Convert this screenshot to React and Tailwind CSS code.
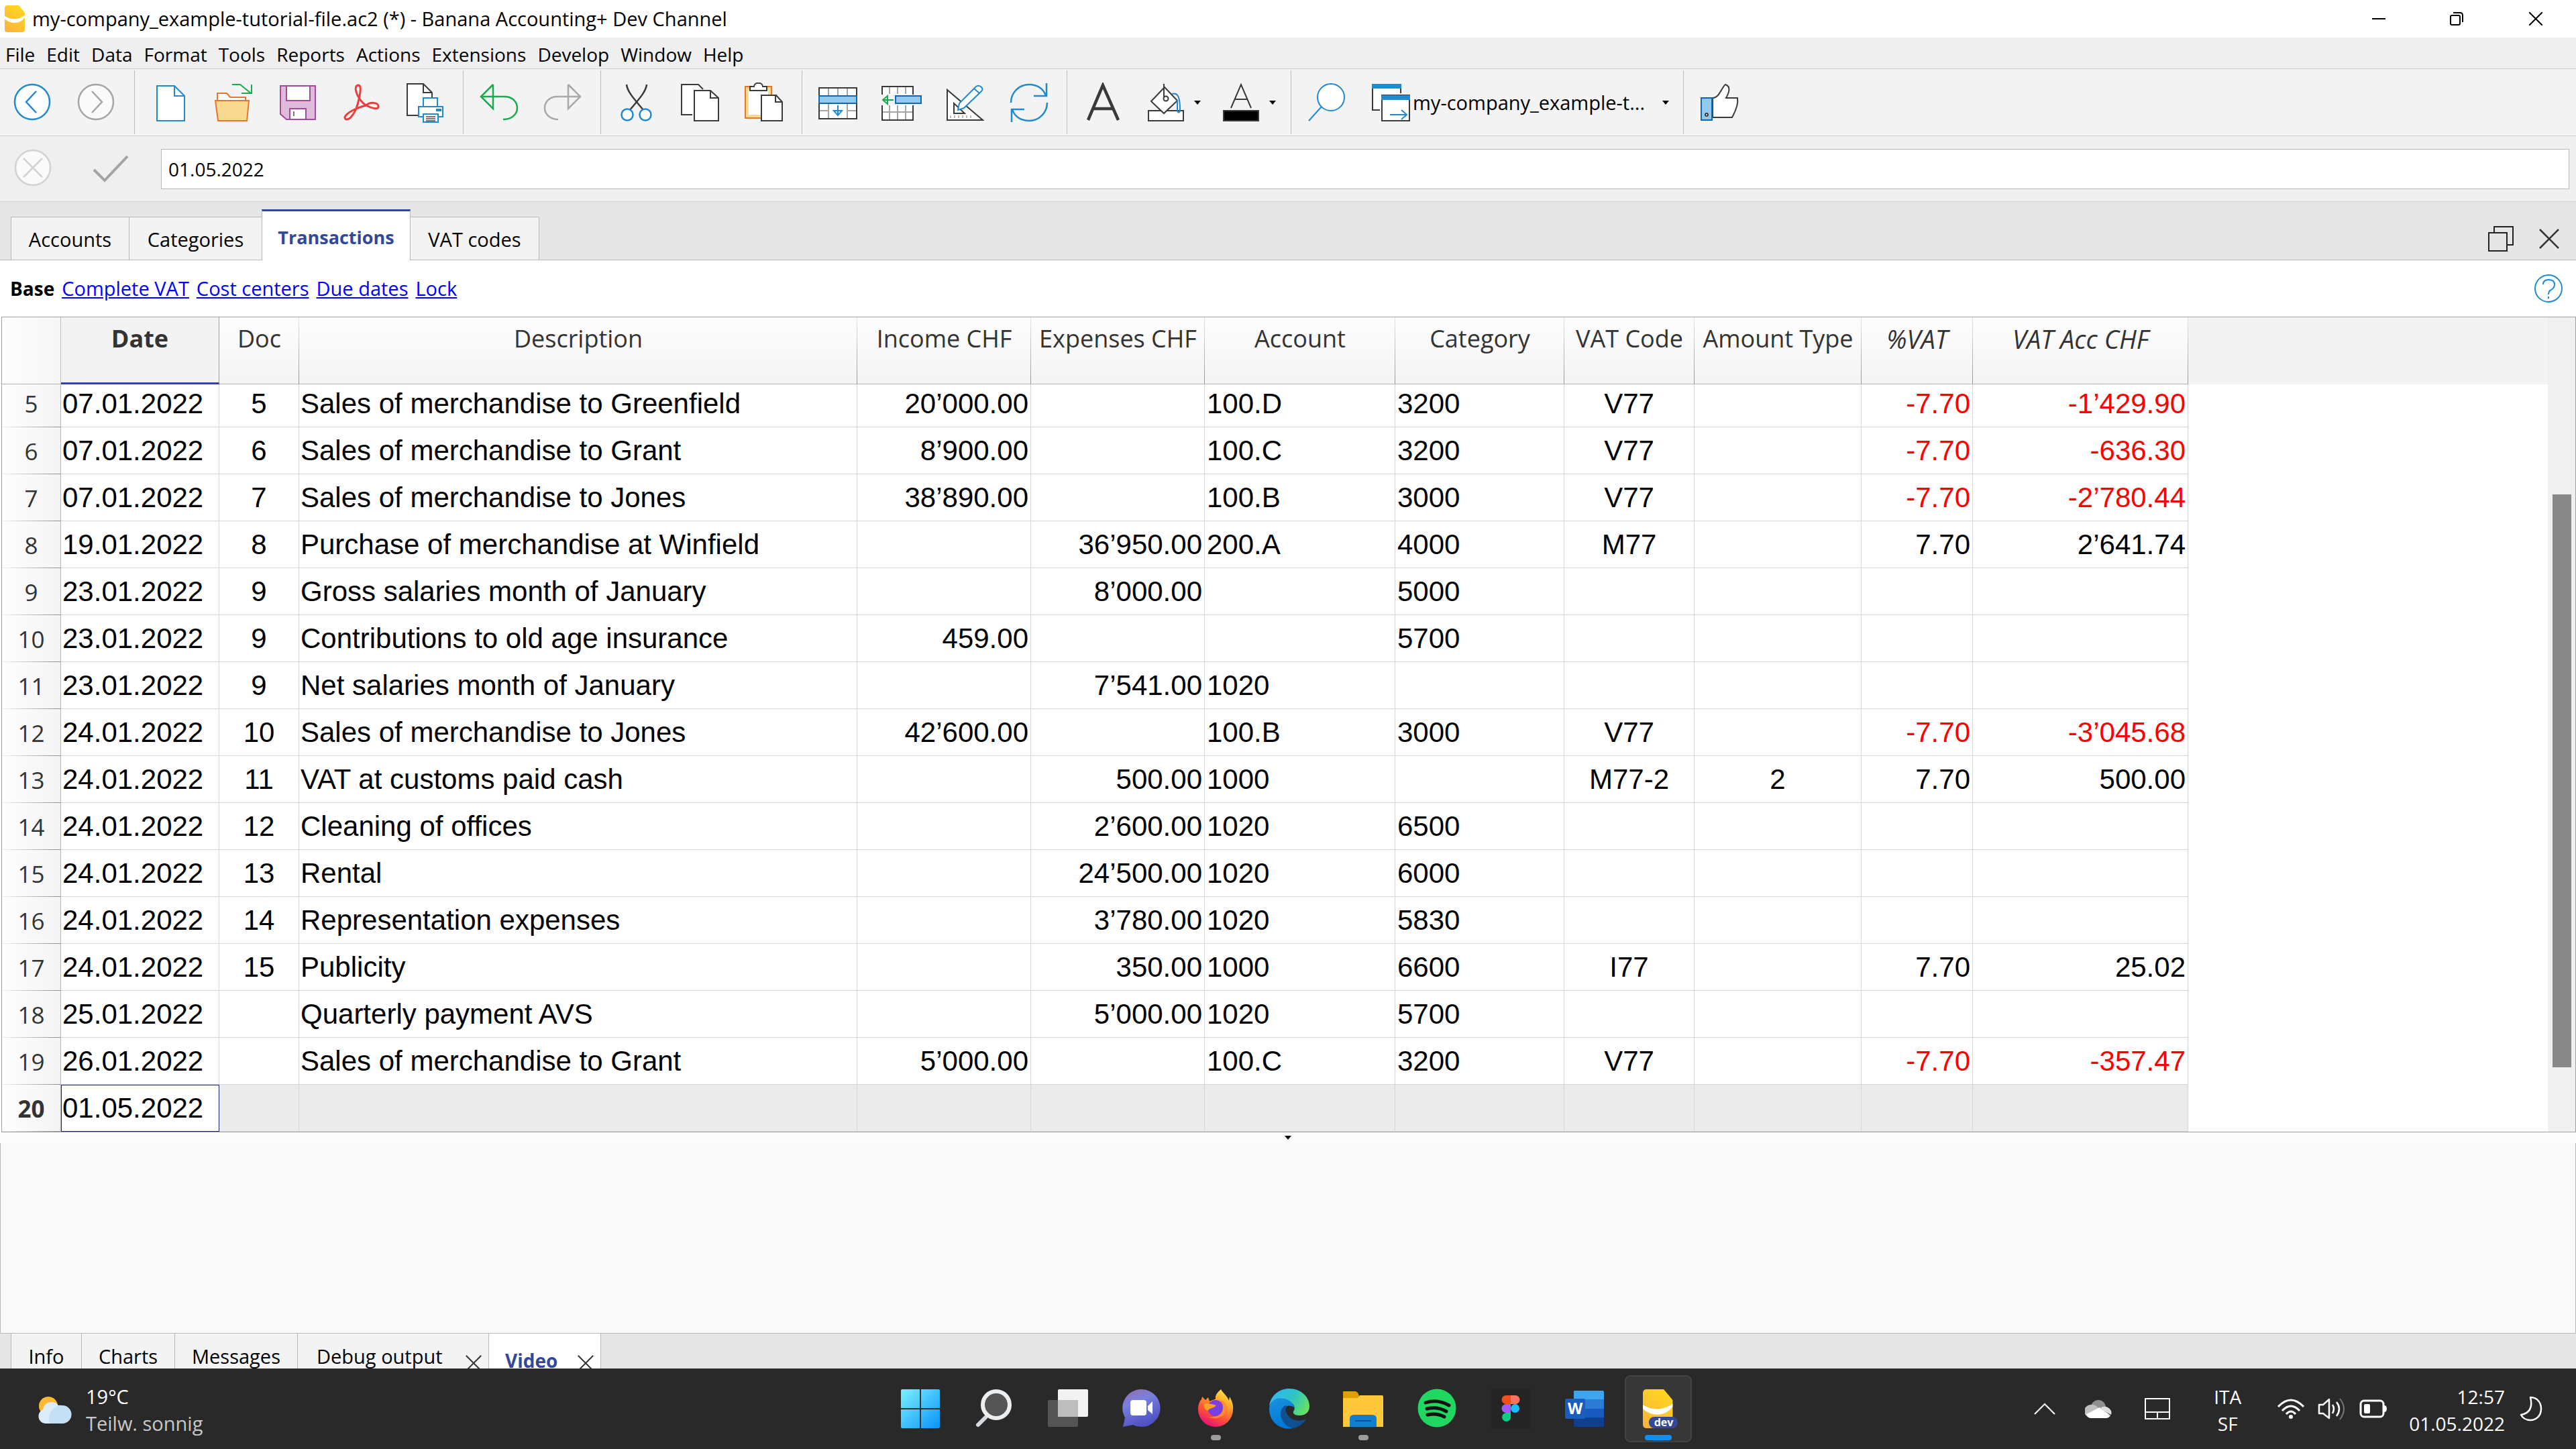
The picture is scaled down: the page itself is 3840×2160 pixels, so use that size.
import React from "react";

const BLUE = "#1f8ad0";
const DARK = "#3a3a3a";

function Icon({ children, label, className = "size-[60px]", box = "0 0 60 60" }) {
  return (
    <svg viewBox={box} className={`shrink-0 ${className}`} fill="none" strokeWidth="2" aria-label={label} aria-hidden={label ? undefined : true}>
      {children}
    </svg>
  );
}

const icons = {
  back: (
    <Icon>
      <circle cx="30" cy="29" r="26" fill="#fff" stroke={BLUE} strokeWidth="2.5" />
      <path d="M36 13 L21 29 L36 45" stroke={BLUE} strokeWidth="2.5" />
    </Icon>
  ),
  forward: (
    <Icon>
      <circle cx="30" cy="29" r="26" fill="#fafafa" stroke="#a5a5a5" strokeWidth="2.5" />
      <path d="M24 13 L39 29 L24 45" stroke="#a5a5a5" strokeWidth="2.5" />
    </Icon>
  ),
  fresh: (
    <Icon>
      <path d="M10 5 H36 L51 20 V57 H10 Z" fill="#fff" stroke={BLUE} />
      <path d="M36 5 V20 H51" stroke={BLUE} />
    </Icon>
  ),
  open: (
    <Icon>
      <path d="M5 27 V16 H19 L24 22 H47 V27" fill="#fff" stroke="#e8772e" />
      <path d="M2 27 H52 L49 57 H6 Z" fill="#f7d98f" stroke="#e8772e" />
      <path d="M27 3 H39 L55 16 M41 16 H56 V3" stroke="#1aab4f" />
    </Icon>
  ),
  save: (
    <Icon>
      <path d="M4 5 H56 V55 H13 L4 47 Z" fill="#dfbadb" stroke="#a44a9d" />
      <path d="M13 5 H48 V27 H13 Z" fill="#fff" stroke="#a44a9d" />
      <path d="M18 39 H42 V55 H18 Z" fill="#fff" stroke="#a44a9d" />
      <path d="M24 43 V50" stroke="#777" />
    </Icon>
  ),
  pdf: (
    <Icon>
      <path
        d="M37 34 C42 29 54 29 55 35 C56 42 44 38 37 34 C31 31 24 22 22 14 C20 8 22 4 25 4 C29 4 29 10 27 20 C26 26 24 33 22 39 C18 48 12 56 7 55 C2 53 6 46 22 39 C27 37 32 35 37 34 Z"
        stroke="#ee3b3b"
        strokeWidth="3"
      />
    </Icon>
  ),
  print: (
    <Icon>
      <path d="M20 49 H3 V2 H27 L40 15 V24" fill="#fff" stroke={DARK} />
      <path d="M27 2 V15 H40" stroke={DARK} />
      <path d="M27 36 V23 H48 V36" fill="#fff" stroke={BLUE} />
      <path d="M20 36 H56 V51 H20 Z" fill="#fff" stroke={BLUE} />
      <rect x="46" y="39" width="8" height="4" fill={BLUE} />
      <path d="M27 47 H49 V59 H27 Z" fill="#fff" stroke={BLUE} />
      <path d="M31 51 H45 M31 54 H45 M31 57 H45" stroke="#777" />
    </Icon>
  ),
  undo: (
    <Icon>
      <path d="M21 3 L3 21 L21 39 V3 M3 21 H38 C50 21 57 29 57 38 C57 48 48 55 36 55" stroke="#1aab4f" strokeWidth="2.5" />
    </Icon>
  ),
  redo: (
    <Icon>
      <path d="M38 3 L56 21 L38 39 V3 M56 21 H22 C10 21 3 29 3 38 C3 48 12 55 23 55" stroke="#a8a8a8" strokeWidth="2.5" />
    </Icon>
  ),
  cut: (
    <Icon>
      <path d="M15 3 C16 12 22 20 41 42 M45 3 C44 12 38 20 19 42" stroke={DARK} strokeWidth="2.5" />
      <circle cx="16" cy="48" r="8.5" fill="#fff" stroke={BLUE} strokeWidth="2.5" />
      <circle cx="43" cy="48" r="8.5" fill="#fff" stroke={BLUE} strokeWidth="2.5" />
    </Icon>
  ),
  copy: (
    <Icon>
      <path d="M18 48 H2 V3 H27 L34 10" fill="#fff" stroke={DARK} />
      <path d="M21 12 H45 L57 23 V57 H21 Z" fill="#fff" stroke={DARK} />
      <path d="M45 12 V23 H57" stroke={DARK} />
    </Icon>
  ),
  paste: (
    <Icon>
      <path d="M2 6 H41 V53 H2 Z" fill="#f7d98f" stroke="#e8772e" />
      <path d="M7 11 H36 V48 H7 Z" fill="#fff" />
      <path d="M9 12 V6 H15 C15 -1 28 -1 28 6 H34 V12 Z" fill="#fff" stroke={DARK} />
      <path d="M26 19 H48 L57 29 V57 H26 Z" fill="#fff" stroke={DARK} />
      <path d="M47 19 V29 H57" stroke={DARK} />
    </Icon>
  ),
  insertRows: (
    <Icon>
      <path d="M2 8 H58 V54 H2 Z" fill="#fff" stroke={DARK} />
      <path d="M16 9 V20 M30 9 V20 M44 9 V20 M16 31 V53 M44 31 V53 M3 42 H16 M44 42 H57" stroke="#a5a5a5" />
      <path d="M2 20 H58 V31 H2 Z" fill="#92c9ee" stroke="#1168b0" />
      <path d="M30 34 V48 M24 42 L30 49 L36 42 Z" stroke={BLUE} />
    </Icon>
  ),
  addRow: (
    <Icon>
      <path d="M1 18 V6 H47 V18 M1 34 V56 H47 V34" fill="#fff" stroke={DARK} />
      <path d="M12 7 V17 M24 7 V17 M36 7 V17 M12 34 V55 M24 34 V55 M36 34 V55 M2 44 H46" stroke="#a5a5a5" />
      <path d="M21 20 H59 V31 H21 Z" fill="#92c9ee" stroke="#1168b0" />
      <path d="M18 26 H3 M9 20 V32 L2 26 Z" stroke="#1aab4f" />
    </Icon>
  ),
  design: (
    <Icon>
      <path d="M3 11 V56 H56 Z" fill="#fff" stroke={DARK} />
      <path d="M13 31 V46 H29 Z" fill="#fff" stroke={DARK} />
      <path d="M8 49 V53 M14 49 V53 M20 49 V53 M26 49 V53 M32 49 V53 M38 49 V53" stroke="#777" strokeWidth="1" />
      <path d="M19 41 L21 31 L46 6 Q50 3 54 7 Q57 10 54 13 L28 38 Z M43 9 L51 16" fill="#fff" stroke={BLUE} />
    </Icon>
  ),
  refresh: (
    <Icon>
      <path d="M3 30 C3 15 15 3 30 3 C43 3 52 10 55 20 M56 1 V20 H37" stroke={BLUE} strokeWidth="2.5" />
      <path d="M57 30 C57 45 45 57 30 57 C17 57 8 50 5 40 M4 59 V40 H23" stroke={BLUE} strokeWidth="2.5" />
    </Icon>
  ),
  letter: (
    <Icon>
      <path d="M8 56 L30 4 L53 56 M16 39 H45" stroke={DARK} strokeWidth="4.5" />
    </Icon>
  ),
  fill: (
    <Icon>
      <path d="M4 42 H56 V57 H4 Z" fill="#fff" stroke={DARK} />
      <path d="M28 7 L8 28 L27 46 L47 27 Z" fill="#fff" stroke={DARK} />
      <circle cx="30" cy="24" r="3.5" fill="#fff" stroke={DARK} />
      <path d="M27 2 V22" stroke={DARK} />
      <path d="M39 17 C46 15 51 18 51 40 C51 46 47 46 47 40 V26" stroke={BLUE} />
    </Icon>
  ),
  color: (
    <Icon>
      <path d="M15 38 L30 3 L45 38 M20 25 H40" stroke={DARK} />
      <path d="M4 42 H56 V57 H4 Z" fill="#000" stroke={DARK} />
    </Icon>
  ),
  search: (
    <Icon>
      <circle cx="36" cy="22" r="20" fill="#fff" stroke={BLUE} />
      <path d="M22 36 L3 57" stroke={BLUE} />
    </Icon>
  ),
  windows: (
    <Icon>
      <path d="M14 41 H3 V4 H45 V16" fill="#fff" stroke={DARK} />
      <rect x="2" y="2" width="44" height="7" fill={BLUE} />
      <path d="M17 19 H58 V57 H17 Z" fill="#fff" stroke={DARK} />
      <rect x="16" y="19" width="43" height="7" fill={BLUE} />
      <path d="M29 48 H54 M46 41 L54 48 L46 55" stroke={BLUE} />
    </Icon>
  ),
  thumb: (
    <Icon>
      <path d="M20 23 C30 23 33 8 39 3 C48 6 44 16 40 23 H57 C59 35 52 46 49 52 H20 Z" fill="#fff" stroke={DARK} />
      <path d="M3 23 H19 V56 H3 Z" fill="#92c9ee" stroke="#1168b0" />
      <circle cx="11" cy="48" r="2" fill="#fff" stroke={DARK} />
    </Icon>
  ),
};

function Caret() {
  return <span className="block w-0 border-x-[5px] border-t-[6px] border-x-transparent border-t-black" />;
}

function Tool({ name, label }) {
  return (
    <button aria-label={label} className="flex h-full w-[95px] items-center justify-center">
      {icons[name]}
    </button>
  );
}

function DropTool({ name, label }) {
  return (
    <button aria-label={label} className="flex h-full w-[112px] items-center gap-[12px] pl-[17px]">
      {icons[name]}
      <Caret />
    </button>
  );
}

function Group({ children }) {
  return <div className="my-[2px] flex items-stretch border-r border-[#bdbdbd] pl-[5px] pr-[9px]">{children}</div>;
}

const menus = ["File", "Edit", "Data", "Format", "Tools", "Reports", "Actions", "Extensions", "Develop", "Window", "Help"];

const columns = [
  { name: "Date", width: "w-[236px]", align: "text-left pl-[2px]" },
  { name: "Doc", width: "w-[119px]", align: "text-center" },
  { name: "Description", width: "w-[832px]", align: "text-left pl-[2px]" },
  { name: "Income CHF", width: "w-[259px]", align: "text-right pr-[3px]" },
  { name: "Expenses CHF", width: "w-[259px]", align: "text-right pr-[3px]" },
  { name: "Account", width: "w-[284px]", align: "text-left pl-[3px]" },
  { name: "Category", width: "w-[252px]", align: "text-left pl-[3px]" },
  { name: "VAT Code", width: "w-[194px]", align: "text-center" },
  { name: "Amount Type", width: "w-[249px]", align: "text-center" },
  { name: "%VAT", width: "w-[166px]", align: "text-right pr-[3px]" },
  { name: "VAT Acc CHF", width: "w-[321px]", align: "text-right pr-[3px]" },
];

const rows = [
  [5, "07.01.2022", "5", "Sales of merchandise to Greenfield", "20’000.00", "", "100.D", "3200", "V77", "", "-7.70", "-1’429.90"],
  [6, "07.01.2022", "6", "Sales of merchandise to Grant", "8’900.00", "", "100.C", "3200", "V77", "", "-7.70", "-636.30"],
  [7, "07.01.2022", "7", "Sales of merchandise to Jones", "38’890.00", "", "100.B", "3000", "V77", "", "-7.70", "-2’780.44"],
  [8, "19.01.2022", "8", "Purchase of merchandise at Winfield", "", "36’950.00", "200.A", "4000", "M77", "", "7.70", "2’641.74"],
  [9, "23.01.2022", "9", "Gross salaries month of January", "", "8’000.00", "", "5000", "", "", "", ""],
  [10, "23.01.2022", "9", "Contributions to old age insurance", "459.00", "", "", "5700", "", "", "", ""],
  [11, "23.01.2022", "9", "Net salaries month of January", "", "7’541.00", "1020", "", "", "", "", ""],
  [12, "24.01.2022", "10", "Sales of merchandise to Jones", "42’600.00", "", "100.B", "3000", "V77", "", "-7.70", "-3’045.68"],
  [13, "24.01.2022", "11", "VAT at customs paid cash", "", "500.00", "1000", "", "M77-2", "2", "7.70", "500.00"],
  [14, "24.01.2022", "12", "Cleaning of offices", "", "2’600.00", "1020", "6500", "", "", "", ""],
  [15, "24.01.2022", "13", "Rental", "", "24’500.00", "1020", "6000", "", "", "", ""],
  [16, "24.01.2022", "14", "Representation expenses", "", "3’780.00", "1020", "5830", "", "", "", ""],
  [17, "24.01.2022", "15", "Publicity", "", "350.00", "1000", "6600", "I77", "", "7.70", "25.02"],
  [18, "25.01.2022", "", "Quarterly payment AVS", "", "5’000.00", "1020", "5700", "", "", "", ""],
  [19, "26.01.2022", "", "Sales of merchandise to Grant", "5’000.00", "", "100.C", "3200", "V77", "", "-7.70", "-357.47"],
  [20, "01.05.2022", "", "", "", "", "", "", "", "", "", ""],
];

const headLines = "bg-[linear-gradient(#e6e6e6,#969696),linear-gradient(#fdfdfd,#f4f4f4)] bg-[length:1px_100%,100%_100%] bg-[position:right,left] bg-no-repeat";
const numberLines = "bg-[linear-gradient(to_right,#f0f0f0,#8c8c8c),linear-gradient(to_right,#fdfdfd,#f4f4f4)] bg-[length:100%_1px,100%_100%] bg-[position:bottom,left] bg-no-repeat";

function Ledger() {
  return (
    <table className="w-[3259px] shrink-0 table-fixed border-separate border-spacing-0 border-l border-[#a0a0a0]">
      <thead>
        <tr className="h-[100px] text-[36px] leading-[48px] text-[#333]">
          <th className="w-[88px] border-b border-r border-b-[#b4b4b4] border-r-[#bdbdbd] bg-[linear-gradient(to_right,#fdfdfd,#f6f6f6)]" aria-label="Row" />
          {columns.map((c, i) => (
            <th
              key={c.name}
              className={`${c.width} whitespace-nowrap pt-[8px] align-top ${
                i === 0
                  ? "border-b-[3px] border-r border-b-[#33479b] border-r-[#a0a0a0] bg-[#f3f3f3] font-bold"
                  : `border-b border-b-[#b4b4b4] font-normal ${headLines} ${i > 8 ? "text-[38px] italic" : ""}`
              }`}
            >
              {c.name}
            </th>
          ))}
        </tr>
      </thead>
      <tbody>
        {rows.map(([number, ...cells], r) => {
          const last = r === rows.length - 1;
          return (
            <tr key={number} className={r === 0 ? "h-[64px] align-top leading-[57px]" : "h-[70px] align-middle leading-[69px]"}>
              <th className={`border-r border-r-[#b4b4b4] text-center text-[35px] text-[#333] ${numberLines} ${last ? "font-bold" : "font-normal"}`}>
                {number}
              </th>
              {cells.map((text, i) => (
                <td
                  key={columns[i].name}
                  className={`whitespace-nowrap border-b border-r border-[#d6d6d6] font-['Liberation_Sans',Arial,sans-serif] text-[42px] ${columns[i].align} ${
                    last ? (i === 0 ? "bg-white outline-1 -outline-offset-1 outline-[#1c2566]" : "bg-[#ebebeb]") : ""
                  } ${text.startsWith("-") ? "text-[#ff0000]" : "text-black"}`}
                >
                  {text}
                </td>
              ))}
            </tr>
          );
        })}
      </tbody>
    </table>
  );
}

function TabButton({ children, className }) {
  return (
    <button role="tab" className={`flex items-center justify-center whitespace-nowrap ${className}`}>
      {children}
    </button>
  );
}

function Cross({ className = "size-[24px]" }) {
  return (
    <Icon box="0 0 30 30" className={className}>
      <path d="M1 1 L29 29 M29 1 L1 29" stroke="#333" strokeWidth="2.5" />
    </Icon>
  );
}

function BananaShape({ id }) {
  return (
    <>
      <defs>
        <linearGradient id={id} x1="0" y1="1" x2="0.6" y2="0">
          <stop offset="0" stopColor="#fbb040" />
          <stop offset="1" stopColor="#ffd520" />
        </linearGradient>
      </defs>
      <path d="M4 0 H21 L30 11 V36 Q30 40 26 40 H4 Q0 40 0 36 V4 Q0 0 4 0 Z" fill={`url(#${id})`} />
      <path d="M0 16 Q15 25 30 15 V18 Q24 26 15 26 Q6 26 0 20 Z" fill="#fff" />
    </>
  );
}

const apps = [
  {
    name: "Start",
    art: (
      <>
        <defs>
          <linearGradient id="start" x1="0" y1="0" x2="58" y2="58" gradientUnits="userSpaceOnUse">
            <stop offset="0" stopColor="#7df3ff" />
            <stop offset="1" stopColor="#0a94fb" />
          </linearGradient>
        </defs>
        <path d="M3 1 H29 V29 H1 V3 Q1 1 3 1 Z M31 1 H57 Q59 1 59 3 V29 H31 Z M1 31 H29 V59 H3 Q1 59 1 57 Z M31 31 H59 V57 Q59 59 57 59 H31 Z" fill="url(#start)" />
      </>
    ),
  },
  {
    name: "Search",
    art: (
      <>
        <path d="M17 43 L6 54" stroke="#d5dade" strokeWidth="6" strokeLinecap="round" />
        <circle cx="33" cy="24" r="20" fill="#555" stroke="#eceff1" strokeWidth="6" />
      </>
    ),
  },
  {
    name: "Task view",
    art: (
      <>
        <rect x="15" y="1" width="45" height="41" rx="2" fill="#f2f2f2" />
        <rect x="0" y="17" width="45" height="40" rx="2" fill="#555" />
        <path d="M15 17 H45 V42 H15 Z" fill="#bdbdbd" />
      </>
    ),
  },
  {
    name: "Chat",
    art: (
      <>
        <defs>
          <linearGradient id="chat" x1="0" y1="0" x2="0.4" y2="1">
            <stop offset="0" stopColor="#9a6aa8" />
            <stop offset="0.4" stopColor="#7a80dd" />
            <stop offset="1" stopColor="#4f52c4" />
          </linearGradient>
        </defs>
        <path d="M30 1 A28 28 0 1 1 17 54 L2 57 L5 43 A28 28 0 0 1 30 1 Z" fill="url(#chat)" />
        <rect x="13" y="17" width="24" height="23" rx="4" fill="#fff" />
        <path d="M39 26 L46 19 V38 L39 32 Z" fill="#fff" />
      </>
    ),
  },
  {
    name: "Firefox",
    open: true,
    art: (
      <>
        <defs>
          <linearGradient id="fox" x1="0.8" y1="0" x2="0.3" y2="1">
            <stop offset="0" stopColor="#fff04a" />
            <stop offset="0.35" stopColor="#ffa026" />
            <stop offset="0.7" stopColor="#ff4b3a" />
            <stop offset="1" stopColor="#e0107a" />
          </linearGradient>
        </defs>
        <path d="M38 1 C42 8 47 10 50 18 L51 12 C54 18 57 24 56 31 A26 26 0 0 1 4 31 C4 23 7 18 9 16 L10 12 L15 17 L19 13 L21 19 C26 16 29 17 30 15 C29 9 34 5 38 1 Z" fill="url(#fox)" />
        <circle cx="30" cy="29" r="12" fill="#7a3fe0" />
        <path d="M13 23 C20 21 27 24 31 25 C27 30 22 28 18 33 C14 31 12 27 13 23 Z" fill="#ffa01e" />
        <path d="M34 17 C43 17 48 24 46 32 C43 43 30 47 19 42 C32 44 41 38 41 28 C41 22 38 19 34 17 Z" fill="#ff8a2e" />
      </>
    ),
  },
  {
    name: "Edge",
    art: (
      <>
        <defs>
          <linearGradient id="edgeTop" x1="0" y1="0.3" x2="1" y2="0.7">
            <stop offset="0" stopColor="#35b8f1" />
            <stop offset="0.5" stopColor="#2cc3c9" />
            <stop offset="1" stopColor="#6be35a" />
          </linearGradient>
          <linearGradient id="edgeSide" x1="0" y1="0" x2="0.4" y2="1">
            <stop offset="0" stopColor="#1a93e0" />
            <stop offset="1" stopColor="#0078d4" />
          </linearGradient>
        </defs>
        <path d="M0 26 C2 10 15 0 30 0 C48 0 60 13 60 26 C60 36 53 40 45 40 C38 40 35 37 36 34 C39 30 38 24 33 21 C22 10 4 16 0 26 Z" fill="url(#edgeTop)" />
        <path d="M0 30 C1 17 12 12 22 15 C31 17 37 23 37 28 C28 22 20 28 20 38 C20 48 27 57 36 59 C17 63 0 50 0 30 Z" fill="url(#edgeSide)" />
        <path d="M24 25 C16 30 15 40 20 48 C25 57 34 60 40 58 C47 55 53 50 55 45 C48 49 36 49 30 42 C24 36 23 31 27 26 Z" fill="#114f93" />
      </>
    ),
  },
  {
    name: "File Explorer",
    open: true,
    art: (
      <>
        <path d="M0 5 Q0 4 1 4 H18 Q21 4 23 8 L25 14 H0 Z" fill="#e0a000" />
        <path d="M0 14 H22 L25 10 H58 Q60 10 60 12 V57 H0 Z" fill="#ffc83a" />
        <path d="M10 57 V45 Q10 39 16 39 H44 Q50 39 50 45 V57 Z" fill="#0f7fd0" />
        <path d="M18 48 H42" stroke="#0a4f9a" strokeWidth="2" />
      </>
    ),
  },
  {
    name: "Spotify",
    art: (
      <>
        <circle cx="30" cy="29" r="28.5" fill="#1fd761" />
        <path d="M13 21 Q31 15 48 25 M15 30 Q31 26 44 34 M16 39 Q30 36 41 42" stroke="#111" strokeWidth="5" strokeLinecap="round" />
      </>
    ),
  },
  {
    name: "Figma",
    art: (
      <>
        <rect x="0" y="0" width="60" height="60" rx="3" fill="#242424" />
        <path d="M30 10 H23 a6.5 6.5 0 0 0 0 13 H30 Z" fill="#f24e1e" />
        <path d="M30 10 H37 a6.5 6.5 0 0 1 0 13 H30 Z" fill="#ff7262" />
        <path d="M30 23 H23 a6.5 6.5 0 0 0 0 13 H30 Z" fill="#a259ff" />
        <circle cx="36.5" cy="29.5" r="6.5" fill="#1abcfe" />
        <path d="M30 36 H23 a6.5 6.5 0 1 0 7 6.5 Z" fill="#0acf83" />
      </>
    ),
  },
  {
    name: "Word",
    art: (
      <>
        <path d="M15 3 H57 Q59 3 59 5 V16 H14 V4 Q14 3 15 3 Z" fill="#41a5ee" />
        <path d="M14 16 H59 V30 H14 Z" fill="#2b7cd3" />
        <path d="M14 30 H59 V43 H14 Z" fill="#185abd" />
        <path d="M14 43 H59 V55 Q59 57 57 57 H16 Q14 57 14 55 Z" fill="#103f91" />
        <rect x="1" y="15" width="30" height="30" rx="2" fill="#1b5dbe" />
        <text x="16" y="38" textAnchor="middle" fontSize="23" fontWeight="700" fill="#fff" fontFamily="Open Sans, sans-serif">W</text>
      </>
    ),
  },
  {
    name: "Banana Accounting dev",
    active: true,
    art: (
      <>
        <g transform="translate(7 1) scale(1.48 1.45)">
          <BananaShape id="bananaDev" />
        </g>
        <rect x="16" y="42" width="43" height="17" rx="8" fill="#33479b" />
        <text x="38" y="56" textAnchor="middle" fontSize="16" fontWeight="700" fill="#fff" fontFamily="Open Sans, sans-serif">dev</text>
      </>
    ),
  },
];

function Taskbar() {
  return (
    <footer className="grid h-[120px] shrink-0 grid-cols-[1fr_auto_1fr] items-center bg-[#292929] text-[28px] leading-[40px] text-white">
      <button className="flex items-center gap-[20px] pl-[54px] pt-[4px] text-left text-[29px]">
        <Icon box="0 0 54 42" className="h-[42px] w-[54px]">
          <circle cx="18" cy="15" r="14" fill="#fbb935" />
          <path d="M13 41 A11 11 0 0 1 10 20 A13 13 0 0 1 33 14 A14 14 0 0 1 40 41 Z" fill="#dcecf8" />
          <path d="M20 41 A20 20 0 0 1 38 14 A13.5 13.5 0 0 1 40 41 Z" fill="#c3e0f4" />
        </Icon>
        <span>
          <span className="block">19°C</span>
          <span className="block text-[#c8c8c8]">Teilw. sonnig</span>
        </span>
      </button>
      <nav className="flex gap-[10px] pl-[4px]" aria-label="Apps">
        {apps.map((app) => (
          <button
            key={app.name}
            aria-label={app.name}
            className={`relative flex size-[100px] items-center justify-center ${app.active ? "rounded-lg border-2 border-[#434343] bg-[#373737]" : ""}`}
          >
            <Icon>{app.art}</Icon>
            {app.open && <span className="absolute bottom-[3px] h-[8px] w-[15px] rounded-full bg-[#9c9c9c]" />}
            {app.active && <span className="absolute bottom-[1px] h-[8px] w-[40px] rounded-full bg-[#0a90fb]" />}
          </button>
        ))}
      </nav>
      <div className="flex items-center justify-end pr-[50px]">
        <button aria-label="Hidden icons" className="mr-[43px]">
          <Icon box="0 0 34 20" className="h-[20px] w-[34px]">
            <path d="M2 18 L17 3 L32 18" stroke="#fff" />
          </Icon>
        </button>
        <Icon box="0 0 40 28" className="mr-[48px] h-[28px] w-[40px]" label="OneDrive">
          <circle cx="20" cy="12" r="11" fill="#8f8f8f" />
          <path d="M9 27 A9 9 0 0 1 8 8 Q15 6 22 15 L9 27 Z" fill="#bfbfbf" />
          <path d="M2 22 L22 12 L38 24 Q36 28 31 28 H8 Q3 27 2 22 Z" fill="#fff" />
          <path d="M22 14 Q28 8 34 12 Q41 16 39 23 Z" fill="#dedede" />
        </Icon>
        <Icon box="0 0 40 34" className="mr-[64px] h-[34px] w-[40px]" label="Touchpad">
          <path d="M2 2 H38 V32 H2 Z M2 22 H38 M20 22 V32" stroke="#fff" />
        </Icon>
        <button className="mr-[54px] pt-[4px] text-center">
          <span className="block">ITA</span>
          <span className="block">SF</span>
        </button>
        <button className="mr-[32px] flex items-center gap-[20px]" aria-label="Network, sound and battery">
          <Icon box="0 0 40 30" className="h-[30px] w-[40px]">
            <path d="M1 12 Q20 -8 39 12 M7 18 Q20 4 33 18 M13 23 Q20 15 27 23" stroke="#fff" strokeWidth="3" />
            <circle cx="20" cy="27" r="3" fill="#fff" />
          </Icon>
          <Icon box="0 0 42 36" className="h-[36px] w-[42px]">
            <path d="M2 12 H8 L17 4 V32 L8 25 H2 Z" stroke="#fff" strokeWidth="2.5" strokeLinejoin="round" />
            <path d="M22 12 Q26 18 22 25 M28 8 Q36 18 28 29" stroke="#fff" strokeWidth="2.5" />
            <path d="M33 3 Q45 18 33 34" stroke="#777" />
          </Icon>
          <Icon box="0 0 42 28" className="h-[28px] w-[42px]">
            <rect x="2" y="2" width="34" height="24" rx="5" stroke="#fff" strokeWidth="3" />
            <rect x="7" y="7" width="9" height="14" rx="2" fill="#fff" />
            <path d="M37 9 Q41 9 41 14 Q41 19 37 19 Z" fill="#fff" />
          </Icon>
        </button>
        <button className="mr-[22px] pt-[4px] text-right">
          <span className="block">12:57</span>
          <span className="block">01.05.2022</span>
        </button>
        <Icon box="0 0 34 38" className="h-[38px] w-[34px]" label="Focus assist">
          <path d="M16 2 C28 2 32 12 32 19 C32 30 24 36 16 36 C9 36 4 32 2 28 C14 26 20 18 16 2 Z" stroke="#fff" strokeWidth="2.5" strokeLinejoin="round" />
        </Icon>
      </div>
    </footer>
  );
}

export default function App() {
  return (
    <div className="flex h-screen flex-col overflow-hidden bg-[#efefef] font-['Open_Sans','Noto_Sans',sans-serif] text-[29px] leading-[38px] text-black">
      <header className="flex h-[56px] shrink-0 items-center bg-white pl-[7px]">
        <Icon box="0 0 30 40" className="mr-[11px] h-[40px] w-[30px]">
          <BananaShape id="bananaTitle" />
        </Icon>
        <h1 className="flex-1 whitespace-nowrap">my-company_example-tutorial-file.ac2 (*) - Banana Accounting+ Dev Channel</h1>
        <div className="flex self-stretch">
          <button aria-label="Minimize" className="flex w-[116px] items-center justify-center">
            <Icon box="0 0 20 20" className="size-[20px]"><path d="M0 10 H20" stroke="#000" /></Icon>
          </button>
          <button aria-label="Restore" className="flex w-[116px] items-center justify-center">
            <Icon box="0 0 20 20" className="size-[20px]">
              <rect x="1" y="5" width="14" height="14" rx="2" stroke="#000" />
              <path d="M5 1 H15 Q19 1 19 5 V15" stroke="#000" />
            </Icon>
          </button>
          <button aria-label="Close" className="flex w-[120px] items-center justify-center">
            <Icon box="0 0 20 20" className="size-[20px]"><path d="M0 0 L20 20 M20 0 L0 20" stroke="#000" /></Icon>
          </button>
        </div>
      </header>

      <nav className="flex h-[46px] shrink-0 items-center gap-[17px] pl-[8px] pt-[4px] text-[28px]" aria-label="Menu">
        {menus.map((m) => (
          <button key={m}>{m}</button>
        ))}
      </nav>

      <div className="flex h-[101px] shrink-0 border-y border-[#d0d0d0] bg-[#f3f3f3]" role="toolbar">
        <div className="my-[2px] flex w-[201px] border-r border-[#bdbdbd]">
          <Tool name="back" label="Back" />
          <Tool name="forward" label="Forward" />
        </div>
        <Group>
          <Tool name="fresh" label="New" />
          <Tool name="open" label="Open" />
          <Tool name="save" label="Save" />
          <Tool name="pdf" label="Export to PDF" />
          <Tool name="print" label="Print preview" />
        </Group>
        <Group>
          <Tool name="undo" label="Undo" />
          <Tool name="redo" label="Redo" />
        </Group>
        <Group>
          <Tool name="cut" label="Cut" />
          <Tool name="copy" label="Copy" />
          <Tool name="paste" label="Paste" />
        </Group>
        <Group>
          <Tool name="insertRows" label="Insert rows" />
          <Tool name="addRow" label="Add row" />
          <Tool name="design" label="Columns setup" />
          <Tool name="refresh" label="Recalculate" />
        </Group>
        <Group>
          <Tool name="letter" label="Font" />
          <DropTool name="fill" label="Fill color" />
          <DropTool name="color" label="Text color" />
        </Group>
        <Group>
          <Tool name="search" label="Search" />
          <button className="flex w-[475px] items-center pl-[18px] pr-[12px]">
            {icons.windows}
            <span className="ml-[3px] flex-1 whitespace-nowrap text-left">my-company_example-t...</span>
            <Caret />
          </button>
        </Group>
        <div className="flex pl-[5px]">
          <Tool name="thumb" label="Feedback" />
        </div>
      </div>

      <div className="flex h-[97px] shrink-0 items-center pr-[10px]">
        <button aria-label="Cancel edit" className="flex w-[96px] justify-center">
          <Icon>
            <circle cx="31" cy="28" r="26" fill="#fafafa" stroke="#d2d2d2" strokeWidth="2.5" />
            <path d="M17 14 L45 42 M45 14 L17 42" stroke="#d2d2d2" strokeWidth="2.5" />
          </Icon>
        </button>
        <button aria-label="Accept edit" className="mr-[10px] flex w-[134px] items-center pl-[40px]">
          <Icon>
            <path d="M4 31 L20 47 L54 11" stroke="#a3a3a3" strokeWidth="4" />
          </Icon>
        </button>
        <input
          aria-label="Cell content"
          defaultValue="01.05.2022"
          className="h-[60px] min-w-0 flex-1 border border-[#b9b9b9] bg-white px-[10px] text-[28px]"
        />
      </div>

      <div className="flex h-[88px] shrink-0 border-t border-[#d0d0d0] bg-[#e6e6e6]">
        <div className="w-[16px] border-b border-[#b9b9b9]" />
        <div className="flex items-end" role="tablist">
          <TabButton className="h-[65px] w-[176px] border border-r-0 border-[#b9b9b9] bg-[#f3f3f3] pt-[2px]">Accounts</TabButton>
          <TabButton className="h-[65px] w-[198px] border border-r-0 border-[#b9b9b9] bg-[#f3f3f3] pt-[2px]">Categories</TabButton>
          <TabButton className="h-[76px] w-[222px] border-x border-t-[3px] border-x-[#b9b9b9] border-t-[#33479b] bg-white pt-[4px] text-[27px] font-bold text-[#33479b]">
            Transactions
          </TabButton>
          <TabButton className="h-[65px] w-[192px] border border-l-0 border-[#b9b9b9] bg-[#f3f3f3] pt-[2px]">VAT codes</TabButton>
        </div>
        <div className="flex flex-1 items-center justify-end gap-[38px] border-b border-[#b9b9b9] pr-[25px] pt-[24px]">
          <button aria-label="Restore panel">
            <Icon box="0 0 38 38" className="size-[38px]">
              <path d="M9 10 V1 H37 V28 H28 M1 10 H28 V37 H1 Z" stroke="#222" />
            </Icon>
          </button>
          <button aria-label="Close panel"><Cross className="size-[30px]" /></button>
        </div>
      </div>

      <main className="flex shrink-0 flex-col bg-white">
        <div className="flex h-[84px] items-center gap-[11px] pl-[15px] pr-[20px]">
          <span className="text-[28px] font-bold">Base</span>
          <a href="#complete-vat" className="text-[#0000ff] underline">Complete VAT</a>
          <a href="#cost-centers" className="text-[#0000ff] underline">Cost centers</a>
          <a href="#due-dates" className="text-[#0000ff] underline">Due dates</a>
          <a href="#lock" className="text-[#0000ff] underline">Lock</a>
          <button aria-label="Help" className="ml-auto">
            <Icon box="0 0 42 42" className="size-[42px]">
              <circle cx="21" cy="21" r="20" stroke={BLUE} />
              <path d="M13 15 Q13 8 21 8 Q30 8 30 15 Q30 20 25 23 Q21 25 21 30 M21 33 V36" stroke={BLUE} />
            </Icon>
          </button>
        </div>
        <div className="ml-[2px] flex border-y border-[#a0a0a0]">
          <Ledger />
          <div className="flex-1"><div className="h-[100px] bg-[#f3f3f3]" /></div>
          <div className="flex w-[42px] justify-center border-r border-[#a0a0a0] bg-[#f0f0f0] pt-[264px]">
            <div className="h-[854px] w-[28px] bg-[#888]" />
          </div>
        </div>
      </main>

      <div className="flex h-[16px] shrink-0 items-center justify-center bg-[#fcfcfc]"><Caret /></div>
      <section className="min-h-0 flex-1 border-x border-b border-[#b9b9b9] bg-[#f9f9f9]" aria-label="Video" />

      <div className="flex h-[52px] shrink-0 items-stretch bg-[#e6e6e6] pl-[16px] leading-[30px]" role="tablist">
        <TabButton className="w-[105px] border-l border-[#b9b9b9] bg-[#f3f3f3] pt-[16px]">Info</TabButton>
        <TabButton className="w-[139px] border-l border-[#b9b9b9] bg-[#f3f3f3] pt-[16px]">Charts</TabButton>
        <TabButton className="w-[183px] border-l border-[#b9b9b9] bg-[#f3f3f3] pt-[16px]">Messages</TabButton>
        <div className="flex w-[285px] items-end border-l border-[#b9b9b9] bg-[#f3f3f3] pl-[28px]">
          <button role="tab" className="flex-1 self-center whitespace-nowrap pt-[16px] text-left">Debug output</button>
          <button aria-label="Close Debug output" className="flex h-[20px] items-start overflow-hidden pr-[10px]"><Cross /></button>
        </div>
        <div className="flex w-[168px] items-end border-x border-[#b9b9b9] bg-white pl-[24px] leading-[24px]">
          <button role="tab" className="flex-1 text-left text-[28px] font-bold text-[#33479b]">Video</button>
          <button aria-label="Close Video" className="flex h-[20px] items-start overflow-hidden pr-[10px]"><Cross /></button>
        </div>
      </div>

      <Taskbar />
    </div>
  );
}
